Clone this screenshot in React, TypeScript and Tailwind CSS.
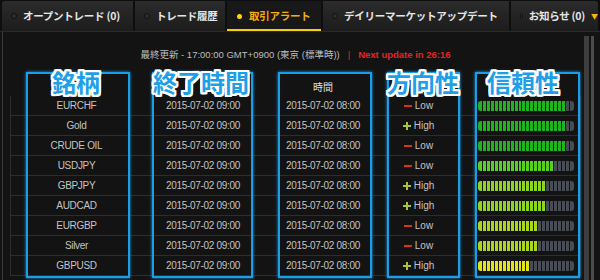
import React from "react";

type Row = { sym: string; end: string; start: string; dir: "low" | "high"; fill: number; color: string };

const rows: Row[] = [
  { sym: "EURCHF", end: "2015-07-02 09:00", start: "2015-07-02 08:00", dir: "low", fill: 22, color: "#1db41d" },
  { sym: "Gold", end: "2015-07-02 09:00", start: "2015-07-02 08:00", dir: "high", fill: 22, color: "#1db41d" },
  { sym: "CRUDE OIL", end: "2015-07-02 09:00", start: "2015-07-02 08:00", dir: "low", fill: 22, color: "#1db41d" },
  { sym: "USDJPY", end: "2015-07-02 09:00", start: "2015-07-02 08:00", dir: "low", fill: 19, color: "#55d11f" },
  { sym: "GBPJPY", end: "2015-07-02 09:00", start: "2015-07-02 08:00", dir: "high", fill: 17, color: "#8ed51d" },
  { sym: "AUDCAD", end: "2015-07-02 09:00", start: "2015-07-02 08:00", dir: "high", fill: 17, color: "#8ed51d" },
  { sym: "EURGBP", end: "2015-07-02 09:00", start: "2015-07-02 08:00", dir: "low", fill: 15, color: "#abd61b" },
  { sym: "Silver", end: "2015-07-02 09:00", start: "2015-07-02 08:00", dir: "low", fill: 15, color: "#abd61b" },
  { sym: "GBPUSD", end: "2015-07-02 09:00", start: "2015-07-02 08:00", dir: "high", fill: 13, color: "#e4e414" },
];

const SEGMENTS = 24;

function Bar({ fill, color }: { fill: number; color: string }) {
  return (
    <div className="flex gap-[1px] h-[10px] w-[96px]">
      {Array.from({ length: SEGMENTS }).map((_, i) => (
        <div
          key={i}
          className={
            "w-[3px] h-full " +
            (i === 0 ? "rounded-l-[3px] w-[4px] " : "") +
            (i === SEGMENTS - 1 ? "rounded-r-[3px] w-[4px] " : "")
          }
          style={{ backgroundColor: i < fill ? color : "#474c55" }}
        />
      ))}
    </div>
  );
}

function Tab({
  label,
  width,
  active,
  arrow,
}: {
  label: string;
  width: string;
  active?: boolean;
  arrow?: boolean;
}) {
  return (
    <div
      className={
        "relative flex items-center h-full pl-[9px] " +
        width +
        (active
          ? " bg-[#181818]"
          : " bg-gradient-to-b from-[#2c2c2c] to-[#1c1c1c]")
      }
    >
      {active ? (
        <div className="w-[5px] h-[5px] rounded-full bg-[#ffd60a] mr-[7px] ml-[1px]" />
      ) : (
        <div className="w-[6px] h-[6px] rounded-full bg-[#2e2e2e] border border-[#111] mr-[6px]" />
      )}
      <span
        className={
          "text-[10.5px] tracking-[-0.25px] leading-none font-bold whitespace-nowrap " +
          (active ? "text-[#f2ad0c]" : "text-[#e6e6e6]")
        }
      >
        {label}
      </span>
      {arrow && <span className="ml-[6px] text-[7px] text-[#f2b80c]">▼</span>}
      {active && <div className="absolute left-0 right-0 bottom-0 h-[2px] bg-[#f5d10a]" />}
    </div>
  );
}

const labelShadow =
  "[text-shadow:2px_0_0_#fff,-2px_0_0_#fff,0_2px_0_#fff,0_-2px_0_#fff,2px_2px_0_#fff,-2px_-2px_0_#fff,2px_-2px_0_#fff,-2px_2px_0_#fff,1px_2px_0_#fff,2px_1px_0_#fff,-1px_2px_0_#fff,-2px_1px_0_#fff,1px_-2px_0_#fff,2px_-1px_0_#fff,-1px_-2px_0_#fff,-2px_-1px_0_#fff]";

export default function App() {
  return (
    <div
      className="relative w-[600px] h-[280px] overflow-hidden bg-[#131313]"
      style={{ fontFamily: '"Liberation Sans", "Noto Sans CJK JP", sans-serif' }}
    >
      {/* Tab bar */}
      <div
        className="flex h-[31px] pt-[1px] px-[2px] gap-[2px] bg-[#0e0e0e]"
        style={{ fontFamily: '"Noto Sans CJK JP", "Liberation Sans", sans-serif' }}
      >
        <Tab label="オープントレード (0)" width="w-[131px] rounded-tl-[3px]" />
        <Tab label="トレード履歴" width="w-[90px]" />
        <Tab label="取引アラート" width="w-[94px]" active />
        <Tab label="デイリーマーケットアップデート" width="w-[186px]" />
        <Tab label="お知らせ (0)" width="w-[87px] rounded-tr-[3px]" arrow />
      </div>

      {/* Content */}
      <div className="flex h-[249px] border-t border-[#2a2a2a]">
        <div className="w-[2px]" />
        <div className="w-px bg-[#3a3a3a]" />
        <div className="w-[7px]" />
        <div className="flex flex-col w-[571px]">
          {/* info line */}
          <div className="h-[33px] pt-[17px] flex justify-center text-[9.5px] leading-[12px] whitespace-nowrap">
            <span className="text-[#bdbdbd]">最終更新 - 17:00:00 GMT+0900 (東京 (標準時))</span>
            <span className="text-[#e02424] mx-[8px]">|</span>
            <span className="text-[#e42424] font-bold">Next update in 26:16</span>
          </div>
          {/* header row */}
          <div className="flex h-[31px] items-end pb-[2px] text-[10px] leading-[12px] text-[#e0e0e0]">
            <div className="w-[132px]" />
            <div className="w-[122px]" />
            <div className="w-[118px] text-center">時間</div>
            <div className="w-[73px]" />
            <div className="w-[126px]" />
          </div>
          {/* body */}
          <div className="flex flex-col border-l border-r border-[#2e2e2e] text-[10px] text-[#c4c4c4] tracking-[-0.3px]">
            {rows.map((r) => (
              <div key={r.sym} className="flex items-center h-[20px] border-b border-[#2e2e2e]">
                <div className="w-[131px] text-center">{r.sym}</div>
                <div className="w-[122px] text-center">{r.end}</div>
                <div className="w-[118px] text-center">{r.start}</div>
                <div className="w-[73px] flex justify-center items-center">
                  {r.dir === "low" ? (
                    <span className="w-[8px] h-[2px] bg-[#d9321f] mr-[3px]" />
                  ) : (
                    <span className="relative w-[8px] h-[8px] mr-[3px]">
                      <span className="absolute left-0 top-[3px] w-[8px] h-[2px] bg-[#a9c43a]" />
                      <span className="absolute left-[3px] top-0 w-[2px] h-[8px] bg-[#a9c43a]" />
                    </span>
                  )}
                  <span className="tracking-normal">{r.dir === "low" ? "Low" : "High"}</span>
                </div>
                <div className="w-[125px] pl-[23px] flex items-center">
                  <Bar fill={r.fill} color={r.color} />
                </div>
              </div>
            ))}
          </div>
        </div>
        {/* scrollbar */}
        <div className="flex-1 flex gap-[2px] pl-[3px] pt-[4px]">
          <div className="w-[5px] h-full bg-[#3e3e3e]" />
          <div className="w-[3px] h-full bg-[#4c4c4c]" />
        </div>
      </div>

      {/* Annotation boxes */}
      <div className="absolute left-[26px] top-[72px] w-[104px] h-[206px] border-2 border-[#1a9ee6] shadow-[0_0_3px_#1a9ee6]" />
      <div className="absolute left-[152px] top-[72px] w-[101px] h-[206px] border-2 border-[#1a9ee6] shadow-[0_0_3px_#1a9ee6]" />
      <div className="absolute left-[278px] top-[72px] w-[94px] h-[206px] border-2 border-[#1a9ee6] shadow-[0_0_3px_#1a9ee6]" />
      <div className="absolute left-[387px] top-[72px] w-[73px] h-[206px] border-2 border-[#1a9ee6] shadow-[0_0_3px_#1a9ee6]" />
      <div className="absolute left-[475px] top-[72px] w-[105px] h-[206px] border-2 border-[#1a9ee6] shadow-[0_0_3px_#1a9ee6]" />

      {/* Annotation labels */}
      <div
        className={"absolute top-[70px] text-[24px] leading-none font-bold text-[#1f9fe8] " + labelShadow}
        style={{ fontFamily: '"Noto Sans CJK JP", sans-serif' }}
      >
        <span className="absolute left-[52px] whitespace-nowrap">銘柄</span>
        <span className="absolute left-[153px] whitespace-nowrap">終了時間</span>
        <span className="absolute left-[387px] whitespace-nowrap">方向性</span>
        <span className="absolute left-[487px] whitespace-nowrap">信頼性</span>
      </div>
    </div>
  );
}
